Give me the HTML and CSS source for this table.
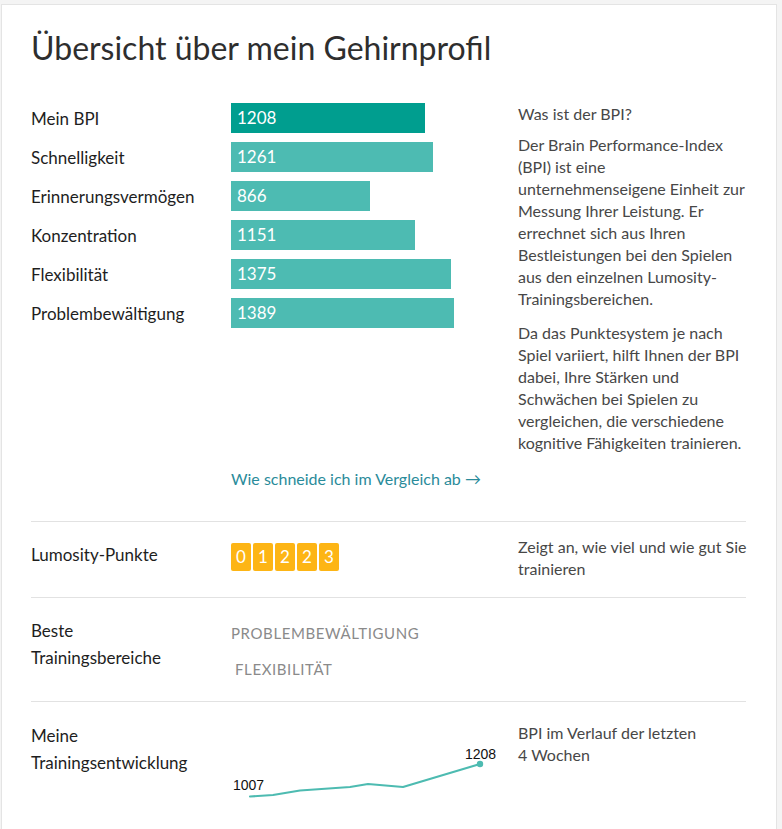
FILE: index.html
```html
<!DOCTYPE html>
<html lang="de">
<head>
<meta charset="utf-8">
<title>Übersicht über mein Gehirnprofil</title>
<link rel="stylesheet" href="styles.css">
</head>
<body>
<div class="card">
  <h1 class="title">Übersicht über mein Gehirnprofil</h1>

  <section class="section section-bpi">
    <div class="bars">
      <div class="bar-row"><div class="bar-label">Mein BPI</div><div class="bar bar-main" style="width:194px">1208</div></div>
      <div class="bar-row"><div class="bar-label">Schnelligkeit</div><div class="bar" style="width:202px">1261</div></div>
      <div class="bar-row"><div class="bar-label">Erinnerungsvermögen</div><div class="bar" style="width:139px">866</div></div>
      <div class="bar-row"><div class="bar-label">Konzentration</div><div class="bar" style="width:184px">1151</div></div>
      <div class="bar-row"><div class="bar-label">Flexibilität</div><div class="bar" style="width:220px">1375</div></div>
      <div class="bar-row"><div class="bar-label">Problembewältigung</div><div class="bar" style="width:223px">1389</div></div>
    </div>
    <aside class="aside">
      <p class="aside-head">Was ist der BPI?</p>
      <p class="aside-para">Der Brain Performance-Index (BPI) ist eine unternehmenseigene Einheit zur Messung Ihrer Leistung. Er errechnet sich aus Ihren Bestleistungen bei den Spielen aus den einzelnen Lumosity-Trainingsbereichen.</p>
      <p class="aside-para">Da das Punktesystem je nach Spiel variiert, hilft Ihnen der BPI dabei, Ihre Stärken und Schwächen bei Spielen zu vergleichen, die verschiedene kognitive Fähigkeiten trainieren.</p>
    </aside>
    <a class="compare-link" href="#">Wie schneide ich im Vergleich ab →</a>
  </section>

  <section class="section section-points">
    <div class="row-label label-points">Lumosity-Punkte</div>
    <div class="digits">
      <span class="digit">0</span><span class="digit">1</span><span class="digit">2</span><span class="digit">2</span><span class="digit">3</span>
    </div>
    <p class="note note-wide">Zeigt an, wie viel und wie gut Sie trainieren</p>
  </section>

  <section class="section section-best">
    <div class="row-label label-tall">Beste Trainingsbereiche</div>
    <div class="tags">
      <span class="tag">Problembewältigung</span>
      <span class="tag tag-indent">Flexibilität</span>
    </div>
  </section>

  <section class="section section-trend">
    <div class="row-label label-tall">Meine Trainingsentwicklung</div>
    <div class="chart">
      <svg width="270" height="65" viewBox="0 0 270 65">
        <polyline points="19,56.5 42,55 69,50.5 119,47 137,44 172,47 249,24" fill="none" stroke="#4dbbb1" stroke-width="2.2" stroke-linejoin="round" stroke-linecap="round"/>
        <circle cx="249" cy="24" r="3.2" fill="#4dbbb1"/>
        <text x="2" y="50" class="chart-num">1007</text>
        <text x="234" y="19" class="chart-num">1208</text>
      </svg>
    </div>
    <p class="note note-narrow">BPI im Verlauf der letzten 4 Wochen</p>
  </section>
</div>
</body>
</html>
```

FILE: styles.css
```css
html, body {
  margin: 0;
  padding: 0;
}

body {
  background: #f4f4f4;
  font-family: Lato, "Open Sans", "Liberation Sans", sans-serif;
  color: #333;
}

.card {
  box-sizing: border-box;
  margin: 4px 0 0 1px;
  width: 776px;
  min-height: 900px;
  background: #fff;
  border: 1px solid #e4e4e4;
  padding: 25px 30px 30px 29px;
}

.title {
  margin: 0;
  font-size: 32px;
  line-height: 36px;
  font-weight: 400;
  color: #2e2e2e;
}

.section {
  display: grid;
  grid-template-columns: 200px 287px 228px;
}

.section + .section {
  border-top: 1px solid #e2e2e2;
}

/* BPI section */
.section-bpi {
  margin-top: 37px;
  padding-bottom: 31px;
}

.bars {
  grid-column: 1 / 3;
  display: flex;
  flex-direction: column;
  gap: 9px;
}

.bar-row {
  display: flex;
  align-items: center;
  height: 30px;
}

.bar-label {
  width: 200px;
  flex: none;
  font-size: 17px;
  color: #1e1e1e;
}

.bar {
  height: 30px;
  box-sizing: border-box;
  padding-left: 6px;
  background: #4dbbb2;
  color: #fff;
  font-size: 17px;
  line-height: 30px;
}

.bar-main {
  background: #009e8f;
}

.aside {
  grid-column: 3;
  font-size: 16px;
  line-height: 22px;
  color: #474747;
}

.aside p {
  margin: 0;
}

.aside-head {
  margin-bottom: 9px !important;
}

.aside-para + .aside-para {
  margin-top: 12px !important;
}

.compare-link {
  grid-column: 2;
  margin-top: 14px;
  font-size: 16px;
  line-height: 22px;
  color: #2a8b9a;
  text-decoration: none;
}

/* generic rows */
.row-label {
  font-size: 17px;
  color: #1e1e1e;
}

.note {
  margin: 0;
  font-size: 16px;
  line-height: 22px;
  color: #474747;
}

.note-wide {
  width: 262px;
}

.note-narrow {
  width: 180px;
}

/* points */
.section-points {
  padding: 14px 0 17px;
}

.label-points {
  margin-top: 8px;
  line-height: 22px;
}

.digits {
  display: flex;
  gap: 2px;
  margin-top: 7px;
  align-self: start;
}

.digit {
  width: 20px;
  height: 28px;
  border-radius: 2px;
  background: #fdb515;
  color: #fff;
  font-size: 17px;
  line-height: 28px;
  text-align: center;
}

/* best areas */
.section-best {
  padding: 19px 0 21px;
}

.label-tall {
  line-height: 27px;
  padding-right: 35px;
}

.tags {
  margin-top: 5px;
  display: flex;
  flex-direction: column;
  align-items: flex-start;
  gap: 14px;
}

.tag {
  font-size: 15px;
  line-height: 22px;
  text-transform: uppercase;
  letter-spacing: 0.6px;
  color: #8a8a8a;
}

.tag-indent {
  margin-left: 4px;
}

/* trend */
.section-trend {
  padding: 20px 0 20px;
}

.chart {
  margin-top: 18px;
}

.chart svg {
  display: block;
}

.chart-num {
  font-family: "Liberation Sans", Arial, sans-serif;
  font-size: 14px;
  fill: #111;
}
```
